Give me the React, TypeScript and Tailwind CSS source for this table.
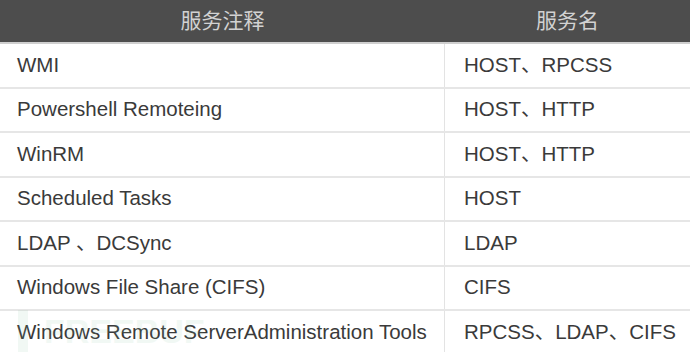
import React from "react";

const rows: [string, string][] = [
  ["WMI", "HOST、RPCSS"],
  ["Powershell Remoteing", "HOST、HTTP"],
  ["WinRM", "HOST、HTTP"],
  ["Scheduled Tasks", "HOST"],
  ["LDAP 、DCSync", "LDAP"],
  ["Windows File Share (CIFS)", "CIFS"],
  ["Windows Remote ServerAdministration Tools", "RPCSS、LDAP、CIFS"],
];

const App: React.FC = () => {
  return (
    <div
      className="relative w-[690px] h-[352px] overflow-hidden bg-white"
      style={{ fontFamily: '"Liberation Sans", "Noto Sans CJK SC", sans-serif' }}
    >
      <div className="flex h-[44px] bg-[#4d4d4d] text-[#d2d2d2] text-[21px] border-b-2 border-[#cfcfcf]">
        <div className="w-[445px] flex items-center justify-center">服务注释</div>
        <div className="flex-1 flex items-center justify-center">服务名</div>
      </div>
      {rows.map(([name, svc]) => (
        <div
          key={name}
          className="flex h-[44.5px] border-b-2 border-[#e6e6e6] text-[20.5px] text-[#3a3a3a]"
        >
          <div className="w-[445px] flex items-center pl-[17px] border-r border-[#e3e3e3] whitespace-nowrap">
            {name}
          </div>
          <div className="flex-1 flex items-center pl-[19px] whitespace-nowrap">{svc}</div>
        </div>
      ))}
      {/* faint watermark */}
      <div className="absolute left-[18px] top-[306px] flex items-center gap-1 opacity-10 pointer-events-none">
        <div className="w-[22px] h-[44px] border-l-[10px] border-[#7fbf9a]" />
        <span className="text-[34px] font-bold text-[#7fbf9a]">FREEBUF</span>
      </div>
    </div>
  );
};

export default App;
